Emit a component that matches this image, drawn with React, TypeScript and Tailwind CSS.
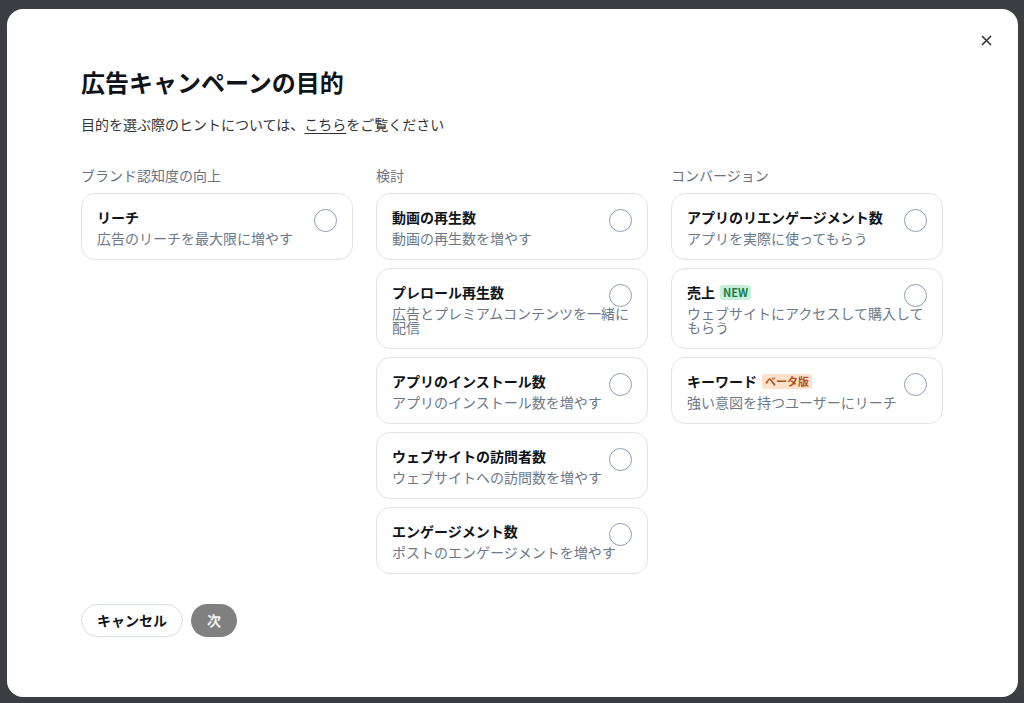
import React from 'react'

type Objective = {
  title: string
  description: string
  badge?: 'new' | 'beta'
}

const columns: { heading: string; items: Objective[] }[] = [
  {
    heading: 'ブランド認知度の向上',
    items: [{ title: 'リーチ', description: '広告のリーチを最大限に増やす' }],
  },
  {
    heading: '検討',
    items: [
      { title: '動画の再生数', description: '動画の再生数を増やす' },
      { title: 'プレロール再生数', description: '広告とプレミアムコンテンツを一緒に配信' },
      { title: 'アプリのインストール数', description: 'アプリのインストール数を増やす' },
      { title: 'ウェブサイトの訪問者数', description: 'ウェブサイトへの訪問数を増やす' },
      { title: 'エンゲージメント数', description: 'ポストのエンゲージメントを増やす' },
    ],
  },
  {
    heading: 'コンバージョン',
    items: [
      { title: 'アプリのリエンゲージメント数', description: 'アプリを実際に使ってもらう' },
      { title: '売上', description: 'ウェブサイトにアクセスして購入してもらう', badge: 'new' },
      { title: 'キーワード', description: '強い意図を持つユーザーにリーチ', badge: 'beta' },
    ],
  },
]

const Badge = ({ kind }: { kind: 'new' | 'beta' }) =>
  kind === 'new' ? (
    <span className="ml-[5px] inline-flex h-[15px] items-center rounded-[3px] bg-[#c5f0d9] px-[3px] text-[11px] font-bold leading-none text-[#1b7a48]">
      NEW
    </span>
  ) : (
    <span className="ml-[5px] inline-flex h-[15px] items-center rounded-[3px] bg-[#fde1cb] px-[3px] text-[11px] font-bold leading-none text-[#b3501a]">
      ベータ版
    </span>
  )

const ObjectiveCard = ({ item }: { item: Objective }) => (
  <button className="relative w-full cursor-pointer rounded-[14px] border border-[#dfe4ea] bg-white px-[15px] pb-[14px] pt-[13px] text-left">
    <div className="flex items-center text-[14px] font-bold leading-5 text-[#0f1419]">
      {item.title}
      {item.badge && <Badge kind={item.badge} />}
    </div>
    <div className="mt-1 text-[14px] leading-[14px] text-[#6b7a8a]">{item.description}</div>
    <span className="absolute right-[15px] top-[15px] h-[23px] w-[23px] rounded-full border-[1.5px] border-[#8d9db0]" />
  </button>
)

export default function App() {
  return (
    <div
      className="flex h-screen w-full bg-[#3d3e43] pb-[6px] pl-[7px] pr-[6px] pt-[9px]"
      style={{ fontFamily: '"Noto Sans CJK JP", "Noto Sans", sans-serif' }}
    >
      <div className="relative flex flex-1 flex-col rounded-[16px] bg-white pl-[74px] pr-[75px] pt-[57px]">
        <button className="absolute right-[17px] top-[16px] flex h-[30px] w-[30px] items-center justify-center text-[#333]">
          <svg width="11" height="11" viewBox="0 0 11 11" fill="none" stroke="currentColor" strokeWidth="1.6">
            <path d="M1 1l9 9M10 1l-9 9" />
          </svg>
        </button>

        <h1 className="text-[24px] font-bold leading-8 text-[#0f1419]">広告キャンペーンの目的</h1>
        <p className="mt-4 text-[14px] leading-5 text-[#333]">
          目的を選ぶ際のヒントについては、
          <a className="underline underline-offset-[3px]">こちら</a>
          をご覧ください
        </p>

        <div className="mt-[31px] grid grid-cols-3 gap-[23px]">
          {columns.map((col) => (
            <div key={col.heading} className="flex flex-col">
              <div className="text-[14px] leading-5 text-[#6b7280]">{col.heading}</div>
              <div className="mt-2 flex flex-col gap-2">
                {col.items.map((item) => (
                  <ObjectiveCard key={item.title} item={item} />
                ))}
              </div>
            </div>
          ))}
        </div>

        <div className="mt-[30px] flex gap-2">
          <button className="h-[33px] rounded-full border border-[#d8dee5] bg-white px-[15px] text-[14px] font-bold text-[#0f1419]">
            キャンセル
          </button>
          <button className="h-[33px] rounded-full bg-[#808081] px-4 text-[14px] font-bold text-[#f4f4f4]">次</button>
        </div>
      </div>
    </div>
  )
}
